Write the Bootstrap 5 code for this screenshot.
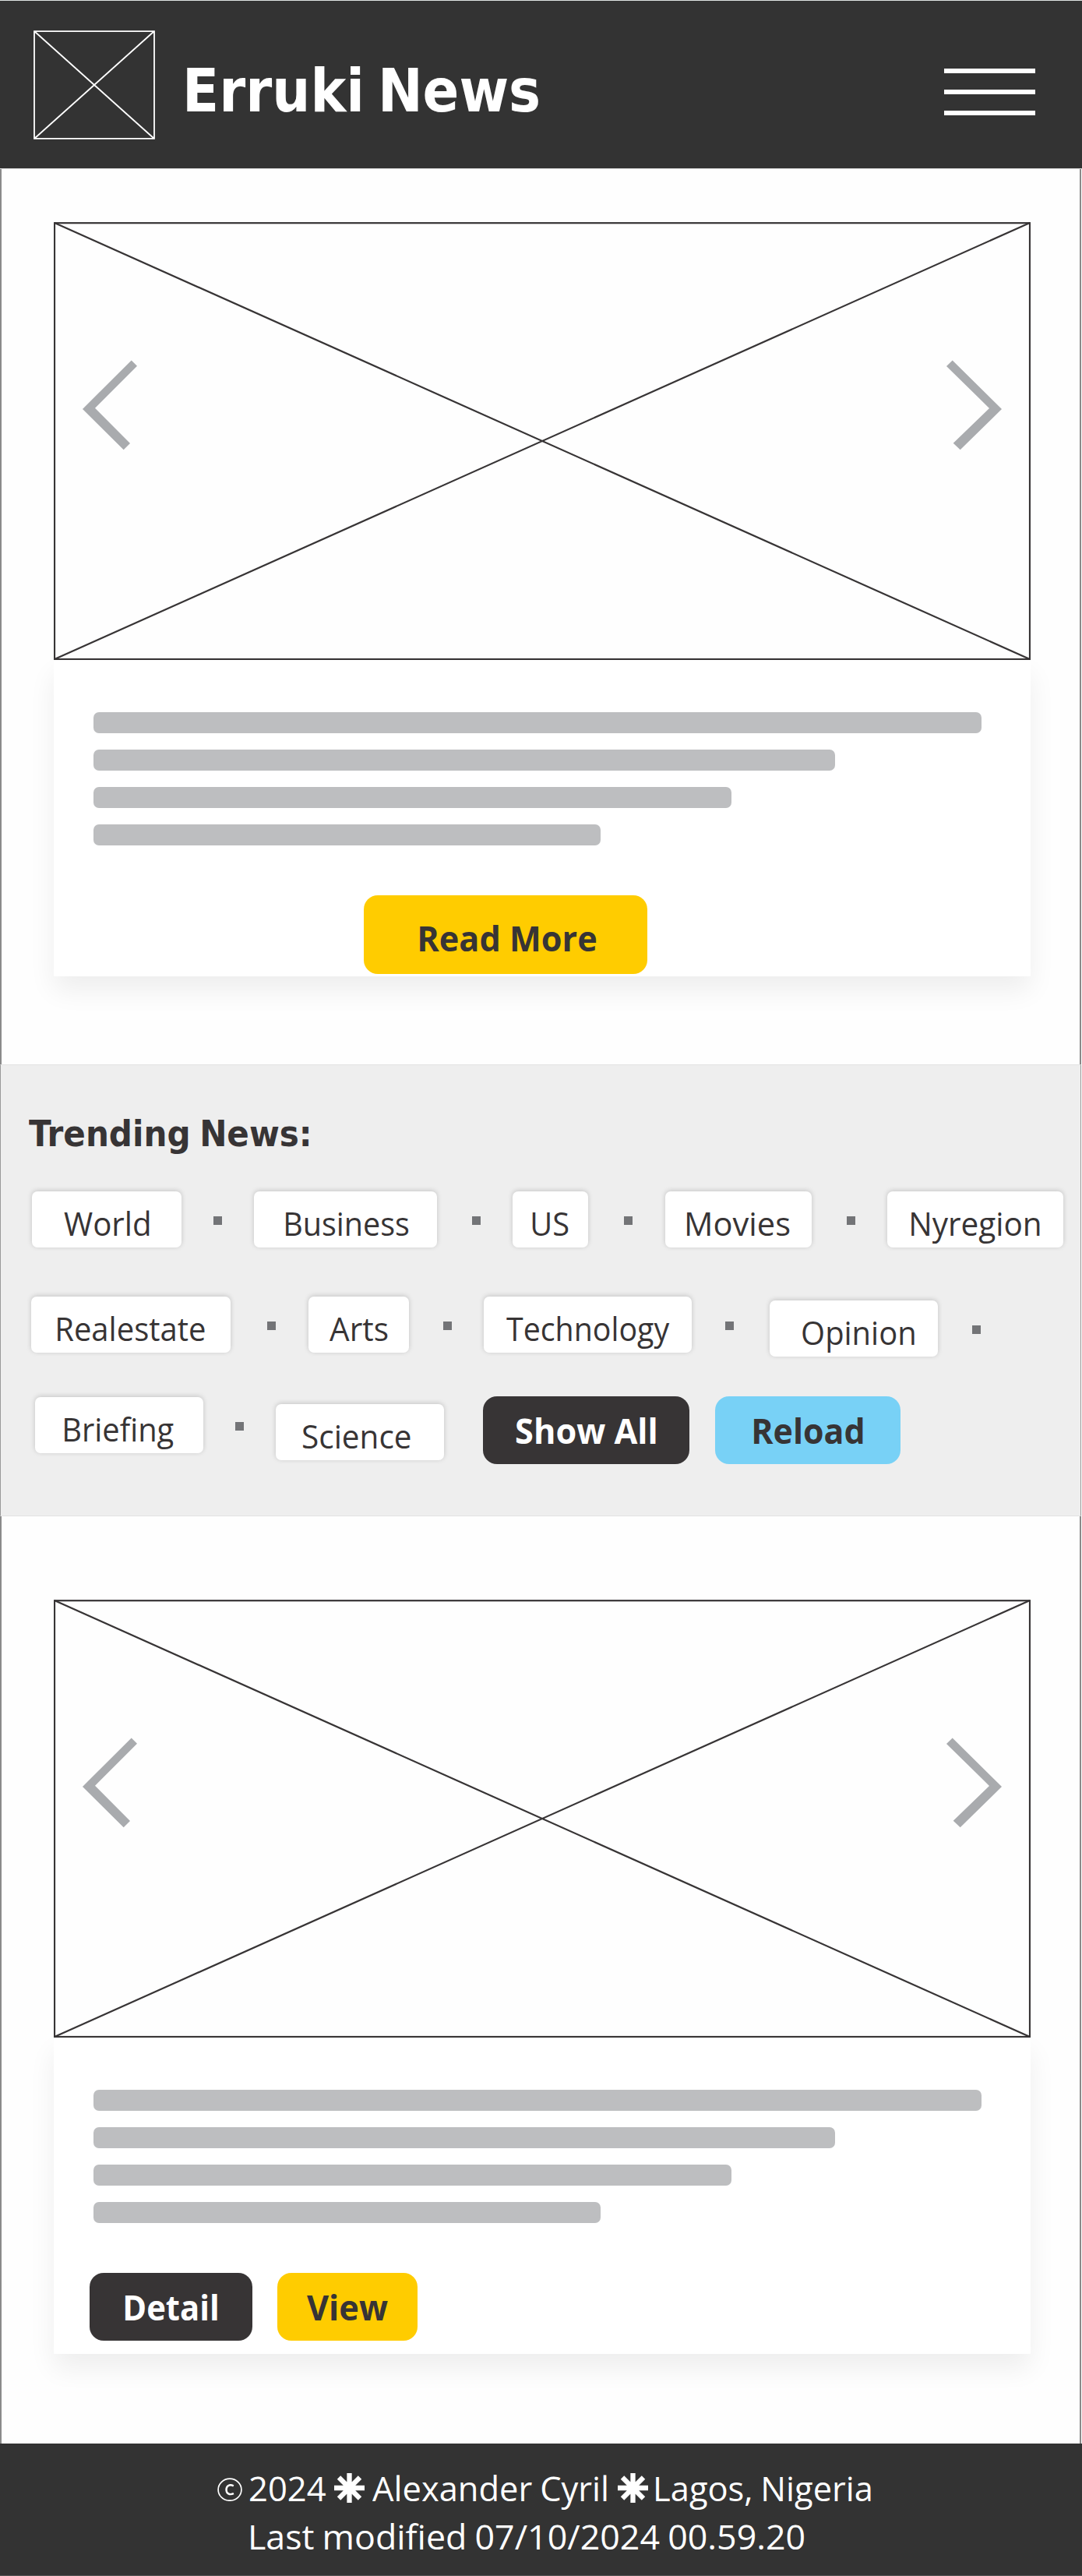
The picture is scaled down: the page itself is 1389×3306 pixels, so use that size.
<!DOCTYPE html>
<html lang="en">
<head>
<meta charset="utf-8">
<meta name="viewport" content="width=device-width, initial-scale=1">
<title>Erruki News</title>
<link href="https://cdn.jsdelivr.net/npm/bootstrap@5.3.0/dist/css/bootstrap.min.css" rel="stylesheet">
<style>
  body { background: #fefefe; color: #373435; font-family: "Open Sans", "Noto Sans", sans-serif; }
  .ink { display: block; white-space: nowrap; transform-origin: 0 50%; text-align: left; }
  .page-frame { width: 1389px; height: 3306px; overflow: hidden; }

  .site-header { height: 217px; background: #333; border-top: 1px solid #dfe3e2; border-bottom: 1px solid #ddd; padding: 0 60px 0 43px; flex: none; }
  .site-title { font: bold 77px/90px "DejaVu Sans Condensed", "DejaVu Sans", sans-serif; font-stretch: condensed; color: #fff; margin: 17px 0 0 41px; word-spacing: -7px; }
  .menu-toggle { width: 117px; gap: 21px; margin-top: 19px; }
  .menu-toggle span { height: 6px; background: #fff; }

  .story { border-left: 2px solid #8a8a8a; border-right: 2px solid #8a8a8a; margin-right: 1px; padding-left: 67px; flex: none; }
  .story-lead { height: 1149px; padding-top: 68px; }
  .story-more { height: 1190px; padding-top: 107px; }
  .story-inner { width: 1254px; }
  .story-text { height: 406px; background: #fff; box-shadow: 0 18px 32px rgba(0,0,0,.068); padding: 67px 0 0 51px; }
  .line-list { gap: 21px; height: 171px; }
  .text-line { height: 27px; border-radius: 7px; background: #bdbec0; }
  .l1 { width: 1140px; } .l2 { width: 952px; } .l3 { width: 819px; } .l4 { width: 651px; }

  .ui-btn { border-radius: 18px; font: bold 45.5px/87px "Open Sans", sans-serif; height: 87px; color: #373435; }
  .ui-yellow { background: #fc0; } .ui-dark { background: #373435; color: #fff; } .ui-blue { background: #78d1f6; }
  .btn-more { width: 364px; height: 101px; margin: 64px 0 0 347px; padding: 7px 0 0 6px !important; }
  .btn-detail { width: 209px; } .btn-view { width: 180px; }
  .action-row { gap: 32px; margin: 64px 0 0 -5px; }

  .trending { height: 580px; background: #eee; border: 1px solid #e2e2e2; border-left-color: #999; border-right-color: #999; margin-right: 1px; flex: none; padding: 56px 0 0 36px; }
  .trending h2 { font: bold 46.5px/64px "DejaVu Sans Condensed", "DejaVu Sans", sans-serif; font-stretch: condensed; margin: 0; word-spacing: -3px; }
  .tag-row { display: grid; height: 72px; }
  .tags-a { grid-template-columns: 192px 93px 235px 97px 97px 99px 188px 97px 226px; margin: 42px 0 0 4px; }
  .tags-b { grid-template-columns: 256px 100px 129px 96px 267px 100px 216px 99px; margin: 63px 0 0 3px; }
  .tags-c { grid-template-columns: 216px 93px 216px 315px 271px; margin: 57px 0 0 8px; }
  .tag { height: 72px; border-radius: 7px; background: #fff; box-shadow: 0 -1px 6px rgba(0,0,0,.18); font-size: 42px; line-height: 72px; color: #373435; padding-top: 5px; text-decoration: none; }
  .drop-5 { margin-top: 5px; } .drop-9 { margin-top: 9px; }
  .push-right { padding-left: 11px; } .push-left { padding-right: 9px; }
  .sep { padding-left: 3px; height: 75px; }
  .sep-even { padding-left: 0; }
  .sep-left { padding: 0 3px 0 0; }
  .sep i { width: 11px; height: 11px; background: #737477; }
  .btn-all { width: 265px; margin-top: -1px; } .btn-reload { width: 238px; margin-top: -1px; padding-left: 2px !important; }

  .site-footer { height: 170px; background: #333; border-bottom: 1px solid #555; color: #fff; font-size: 44px; line-height: 62px; padding-top: 26px; flex: none; word-spacing: -1.5px; }
  .credit { height: 62px; padding-left: 279px; }
  .credit svg { flex: none; }
  .credit .star-a { margin-left: 11px; } .credit .star-b { margin-left: 14.5px; }
  .modified { padding-left: 322px; }
</style>
<script src="https://cdn.jsdelivr.net/npm/bootstrap@5.3.0/dist/js/bootstrap.bundle.min.js"></script>
</head>
<body>
<svg class="d-none" xmlns="http://www.w3.org/2000/svg">
  <symbol id="slide" viewBox="0 0 1254 562">
    <rect x="1" y="1.2" width="1252" height="559.8" fill="none" stroke="#373435" stroke-width="2.2"/>
    <path d="M1 1 1253 561M1 561 1253 1" stroke="#373435" stroke-width="2.2"/>
    <path fill="#a9abae" d="M99.7 177.5 107 184.8 53 238.7 98 283.9 89.7 292.3 37 239.9Z"/>
    <path fill="#a9abae" d="M1153.7 177.5 1146 185 1201 238.9 1154.7 283.7 1163.7 292.3 1217 240Z"/>
  </symbol>
  <symbol id="star" viewBox="0 0 39 38">
    <path stroke="#fff" stroke-width="6.3" d="M19.5 0V38M0 19H39M6 5.5 33 32.5M33 5.5 6 32.5"/>
  </symbol>
</svg>
<div class="page-frame d-flex flex-column">
  <header class="site-header d-flex align-items-center">
    <svg width="156" height="140" viewBox="0 0 156 140" fill="none" stroke="#fff" stroke-width="1.8"><path d="M1 1.2H155V138.8H1ZM1 1 155 139M155 1 1 139"/></svg>
    <h1 class="site-title"><span class="ink" data-w="451">Erruki News</span></h1>
    <button class="menu-toggle btn p-0 border-0 rounded-0 d-flex flex-column ms-auto" aria-label="Menu"><span class="w-100"></span><span class="w-100"></span><span class="w-100"></span></button>
  </header>

  <section class="story story-lead">
    <div class="story-inner">
      <svg class="d-block" width="1254" height="562"><use href="#slide"/></svg>
      <div class="story-text">
        <div class="line-list d-flex flex-column">
          <div class="text-line l1"></div><div class="text-line l2"></div><div class="text-line l3"></div><div class="text-line l4"></div>
        </div>
        <button class="ui-btn ui-yellow btn-more btn p-0 border-0 d-flex justify-content-center align-items-center"><span class="ink" data-w="226">Read More</span></button>
      </div>
    </div>
  </section>

  <section class="trending">
    <h2><span class="ink" data-w="360">Trending News:</span></h2>
    <nav class="tag-row tags-a">
      <a class="tag d-flex justify-content-center"><span class="ink" data-w="110">World</span></a>
      <span class="sep sep-even d-flex justify-content-center align-items-center"><i></i></span>
      <a class="tag d-flex justify-content-center ps-1"><span class="ink" data-w="158">Business</span></a>
      <span class="sep d-flex justify-content-center align-items-center"><i></i></span>
      <a class="tag d-flex justify-content-center"><span class="ink" data-w="47">US</span></a>
      <span class="sep d-flex justify-content-center align-items-center"><i></i></span>
      <a class="tag d-flex justify-content-center"><span class="ink" data-w="132">Movies</span></a>
      <span class="sep d-flex justify-content-center align-items-center"><i></i></span>
      <a class="tag d-flex justify-content-center"><span class="ink" data-w="165">Nyregion</span></a>
    </nav>
    <nav class="tag-row tags-b">
      <a class="tag d-flex justify-content-center"><span class="ink" data-w="189">Realestate</span></a>
      <span class="sep ps-1 d-flex justify-content-center align-items-center"><i></i></span>
      <a class="tag d-flex justify-content-center"><span class="ink" data-w="75">Arts</span></a>
      <span class="sep d-flex justify-content-center align-items-center"><i></i></span>
      <a class="tag d-flex justify-content-center"><span class="ink" data-w="210">Technology</span></a>
      <span class="sep sep-left d-flex justify-content-center align-items-center"><i></i></span>
      <a class="tag drop-5 push-right d-flex justify-content-center"><span class="ink" data-w="144">Opinion</span></a>
      <span class="sep sep-even drop-5 d-flex justify-content-center align-items-center"><i></i></span>
    </nav>
    <nav class="tag-row tags-c">
      <a class="tag d-flex justify-content-center"><span class="ink" data-w="139.5">Briefing</span></a>
      <span class="sep sep-even d-flex justify-content-center align-items-center"><i></i></span>
      <a class="tag drop-9 push-left d-flex justify-content-center"><span class="ink" data-w="138">Science</span></a>
      <button class="ui-btn ui-dark btn-all btn p-0 border-0 ms-auto d-flex justify-content-center"><span class="ink" data-w="179">Show All</span></button>
      <button class="ui-btn ui-blue btn-reload btn p-0 border-0 ms-auto d-flex justify-content-center"><span class="ink" data-w="140">Reload</span></button>
    </nav>
  </section>

  <section class="story story-more">
    <div class="story-inner">
      <svg class="d-block" width="1254" height="562"><use href="#slide"/></svg>
      <div class="story-text">
        <div class="line-list d-flex flex-column">
          <div class="text-line l1"></div><div class="text-line l2"></div><div class="text-line l3"></div><div class="text-line l4"></div>
        </div>
        <div class="action-row d-flex">
          <button class="ui-btn ui-dark btn-detail btn p-0 border-0 d-flex justify-content-center"><span class="ink" data-w="118">Detail</span></button>
          <button class="ui-btn ui-yellow btn-view btn p-0 border-0 d-flex justify-content-center"><span class="ink" data-w="104">View</span></button>
        </div>
      </div>
    </div>
  </section>

  <footer class="site-footer">
    <div class="credit d-flex align-items-center">
      <svg class="mt-1" width="32" height="30" viewBox="0 0 32 30" fill="none" stroke="#fff" stroke-width="1.7"><ellipse cx="16" cy="15.2" rx="14.9" ry="14"/><path stroke-width="2.4" d="M20.8 10.4C15.5 7.6 11.5 10.4 11.5 15.2S15.5 22.6 21 20.2"/></svg>
      <span class="ink" data-w="97.5" data-gap="9.5">2024</span>
      <svg class="star-a" width="39" height="38"><use href="#star"/></svg>
      <span class="ink" data-w="301" data-gap="9.5">Alexander Cyril</span>
      <svg class="star-b" width="39" height="38"><use href="#star"/></svg>
      <span class="ink" data-w="275.5" data-gap="10">Lagos, Nigeria</span>
    </div>
    <div class="modified"><span class="ink" data-w="710">Last modified 07/10/2024 00.59.20</span></div>
  </footer>
</div>
<script>
  // Condense every label so its inked glyphs span exactly data-w pixels.
  var ctx = document.createElement('canvas').getContext('2d');
  document.querySelectorAll('.ink').forEach(function (el) {
    var cs = getComputedStyle(el), w = parseFloat(el.dataset.w);
    ctx.font = cs.fontWeight + ' ' + cs.fontSize + ' ' + cs.fontFamily;
    var m = ctx.measureText(el.textContent);
    var probe = document.createElement('span');
    probe.style.cssText = 'position:absolute;visibility:hidden;white-space:nowrap';
    probe.textContent = el.textContent;
    el.appendChild(probe);
    var k = probe.getBoundingClientRect().width / m.width;
    el.removeChild(probe);
    var left = -m.actualBoundingBoxLeft * k;
    var s = w / ((m.actualBoundingBoxRight + m.actualBoundingBoxLeft) * k);
    el.style.width = w + 'px';
    if (el.dataset.gap) el.style.marginLeft = el.dataset.gap + 'px';
    el.style.transform = 'translateX(' + (-left * s) + 'px) scaleX(' + s + ')';
  });
</script>
</body>
</html>
